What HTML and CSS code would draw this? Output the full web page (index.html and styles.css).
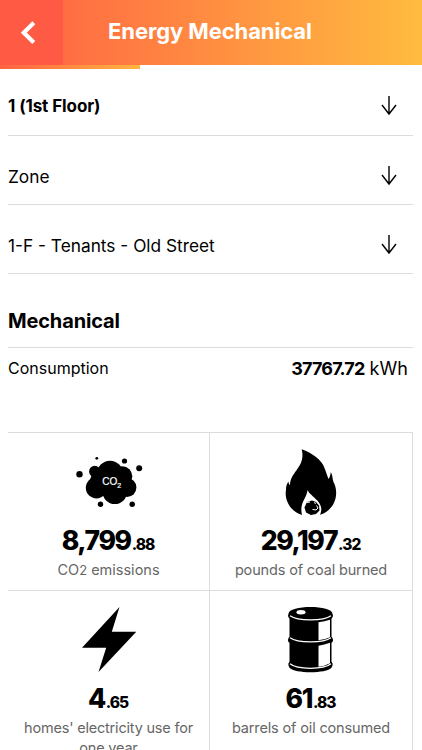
FILE: index.html
```html
<!DOCTYPE html>
<html lang="en">

<head>
    <meta charset="UTF-8">
    <meta name="viewport" content="width=device-width, initial-scale=1.0">
    <title>Energy Mechanical</title>
    <link rel="stylesheet" href="styles.css">
</head>

<body>
    <header class="header">
        <button class="back" aria-label="Back">
            <svg width="16" height="24" viewBox="0 0 16 24">
                <path d="M13.8 1.8L3.8 11.7L13.8 21.5" fill="none" stroke="#fff" stroke-width="4.2" />
            </svg>
        </button>
        <h1 class="title">Energy Mechanical</h1>
    </header>
    <div class="progress"></div>

    <main class="content">
        <!-- Filters -->
        <div class="filter">
            <span class="filter-floor">1 (1st Floor)</span>
            <svg class="arrow" width="16" height="20" viewBox="0 0 16 20">
                <path d="M8 0V18M1 9L8 18L15 9" />
            </svg>
        </div>
        <div class="filter">
            <span>Zone</span>
            <svg class="arrow" width="16" height="20" viewBox="0 0 16 20">
                <path d="M8 0V18M1 9L8 18L15 9" />
            </svg>
        </div>
        <div class="filter">
            <span>1-F - Tenants - Old Street</span>
            <svg class="arrow" width="16" height="20" viewBox="0 0 16 20">
                <path d="M8 0V18M1 9L8 18L15 9" />
            </svg>
        </div>

        <h2 class="section-title">Mechanical</h2>
        <div class="consumption">
            <span class="consumption-label">Consumption</span>
            <span class="consumption-value"><b>37767.72</b> <span class="unit">kWh</span></span>
        </div>

        <!-- Equivalents -->
        <div class="grid">
            <div class="card emissions">
                <svg class="icon" width="80" height="80" viewBox="0 0 80 80">
                    <circle cx="27.5" cy="46.7" r="10.7" />
                    <circle cx="25.8" cy="30.5" r="5.7" />
                    <circle cx="41" cy="32.7" r="13" />
                    <circle cx="53.3" cy="35.2" r="10" />
                    <circle cx="58" cy="46.5" r="9.4" />
                    <circle cx="45.8" cy="50.7" r="12.3" />
                    <circle cx="34" cy="41" r="13" />
                    <circle cx="10.5" cy="33.3" r="3.2" />
                    <circle cx="27.8" cy="17.3" r="1.4" />
                    <circle cx="55.5" cy="20" r="2.6" />
                    <circle cx="70.2" cy="27.3" r="3" />
                    <circle cx="31.5" cy="63.3" r="2.7" />
                    <circle cx="63.2" cy="63.3" r="2.7" />
                    <text class="co2" x="33.2" y="44">CO<tspan class="co2-sub" dy="3">2</tspan></text>
                </svg>
                <div class="number">8,799<small>.88</small></div>
                <p class="caption">CO<small>2</small> emissions</p>
            </div>
            <div class="card coal">
                <svg class="icon" width="80" height="80" viewBox="0 0 80 80">
                    <path d="M30.700 8.300C41 12 51 19 53.500 27C55 31 56 34 57.500 38C59 36 59.500 34 59.700 31.300C62 34 61 39 63.500 43C69 58 60 71 49 73.700C53 65 47 60 42 55.500C39.500 53 38 52 36.500 49C36 57 28 62 31 74C20 71 13 59 15 49C15 45.500 15.500 43 17.500 40.500C17.500 42 18 43.500 19 44C19.500 30 35 26 30.700 8.300Z" />
                    <path d="M36 61L41 59.500L45 61L48 64.500L48.500 69.500L45 73L40 74L35 71.500L33.500 66.500Z" />
                    <path d="M43 61.500L45 62.500M45.500 64.500L47 67L45 69L41.500 68.500M36 61.500L39 61" fill="none" stroke="#fff" stroke-width="1" />
                </svg>
                <div class="number">29,197<small>.32</small></div>
                <p class="caption">pounds of coal burned</p>
            </div>
            <div class="card homes">
                <svg class="icon" width="80" height="80" viewBox="0 0 80 80">
                    <path d="M50.500 8L13 48.700H37.200L29.500 73L67.300 32.700H42.800Z" />
                </svg>
                <div class="number">4<small>.65</small></div>
                <p class="caption">homes' electricity use for one year</p>
            </div>
            <div class="card oil">
                <svg class="icon" width="80" height="80" viewBox="0 0 80 80">
                    <g transform="translate(-0.5 0.8)">
                        <path d="M18 14C18 5 62 5 62 14C63 16 62 18 61 19V37C63 39 63 42 61 43V62C63 64 62 66 61 68C56 74 24 74 19 68C18 66 17 64 19 62V43C17 42 17 39 19 37V19C18 18 17 16 18 14Z" />
                        <path d="M19.500 16C27 21.500 53 21.500 60.500 16M19.500 38C27 43.500 53 43.500 60.500 38M19.500 64C27 70 53 70 60.500 64" fill="none" stroke="#fff" stroke-width="1.300" />
                        <path d="M48 22.500Q54 21.700 59.500 20V37.500Q54 40 48 40.500ZM48 46Q54 45 59.500 43V63.500Q54 66.500 48 67Z" fill="#fff" />
                        <ellipse cx="30.500" cy="12.500" rx="4.500" ry="2.200" fill="#fff" />
                    </g>
                </svg>
                <div class="number">61<small>.83</small></div>
                <p class="caption">barrels of oil consumed</p>
            </div>
        </div>
    </main>
</body>

</html>
```
FILE: styles.css
```css
body {
    margin: 0;
    height: 750px;
    overflow: hidden;
    background-color: #fff;
    color: #000;
    font-family: Inter, "Liberation Sans", sans-serif;
}

.header {
    display: grid;
    grid-template-columns: 63px 1fr 65px;
    height: 65px;
    background: linear-gradient(to right, #ff5f43, #ffbb3f);
}

.back {
    display: flex;
    align-items: center;
    padding: 0 0 0 20px;
    border: 0;
    background-color: #ff5a43;
}

.title {
    margin: 0;
    color: #fff;
    font-size: 22px;
    font-weight: 700;
    line-height: 63px;
    text-align: center;
    white-space: nowrap;
    letter-spacing: -0.1px;
}

.progress {
    width: 140px;
    height: 4px;
    background: linear-gradient(to right, #ff6243, #ffb53f);
}

.content {
    padding: 0 9px 0 8px;
}

.filter {
    display: flex;
    align-items: center;
    justify-content: space-between;
    box-sizing: border-box;
    height: 69px;
    padding: 12px 16px 0 0;
    border-bottom: 1px solid #dcdcdc;
    font-size: 17.3px;
}

.filter:first-child {
    height: 67px;
    padding-top: 7px;
}

.filter-floor {
    font-size: 17px;
    font-weight: 700;
    letter-spacing: -0.1px;
}

.arrow {
    fill: none;
    stroke: #000;
    stroke-width: 1.4;
}

.section-title {
    margin: 0;
    padding: 35px 0 14px;
    font-size: 20px;
    line-height: 24px;
    font-weight: 700;
    letter-spacing: -0.15px;
}

.consumption {
    display: flex;
    align-items: center;
    justify-content: space-between;
    height: 40px;
    padding-right: 5px;
    border-top: 1px solid #dcdcdc;
    font-size: 18px;
}

.consumption-label {
    font-size: 16px;
}

.consumption-value b {
    letter-spacing: -0.85px;
}

.unit {
    letter-spacing: 0.1px;
}

.grid {
    display: grid;
    grid-template-columns: 202px 203px;
    grid-template-rows: 158px 180px;
    margin-top: 44px;
}

.card {
    box-sizing: border-box;
    padding-top: 8px;
    border-top: 1px solid #dcdcdc;
    border-right: 1px solid #dcdcdc;
    text-align: center;
}

.icon {
    display: block;
    margin: 0 auto;
}

.co2 {
    fill: #fff;
    font-family: "Liberation Sans", sans-serif;
    font-size: 10px;
    stroke: #fff;
    stroke-width: 0.2;
}

.co2-sub {
    font-size: 7px;
}

.number {
    height: 37px;
    padding-right: 1px;
    font-size: 26.5px;
    line-height: 38px;
    font-weight: 800;
    letter-spacing: -1.4px;
}

.number small {
    margin-left: 1px;
    font-size: 15.5px;
    letter-spacing: -1px;
}

.caption {
    margin: 2px 10px 0;
    color: #666;
    font-size: 14.5px;
    line-height: 20px;
    letter-spacing: -0.15px;
}

.caption small {
    font-size: 13px;
}

.emissions .caption {
    letter-spacing: 0;
}

.homes .caption {
    letter-spacing: -0.2px;
}
```
